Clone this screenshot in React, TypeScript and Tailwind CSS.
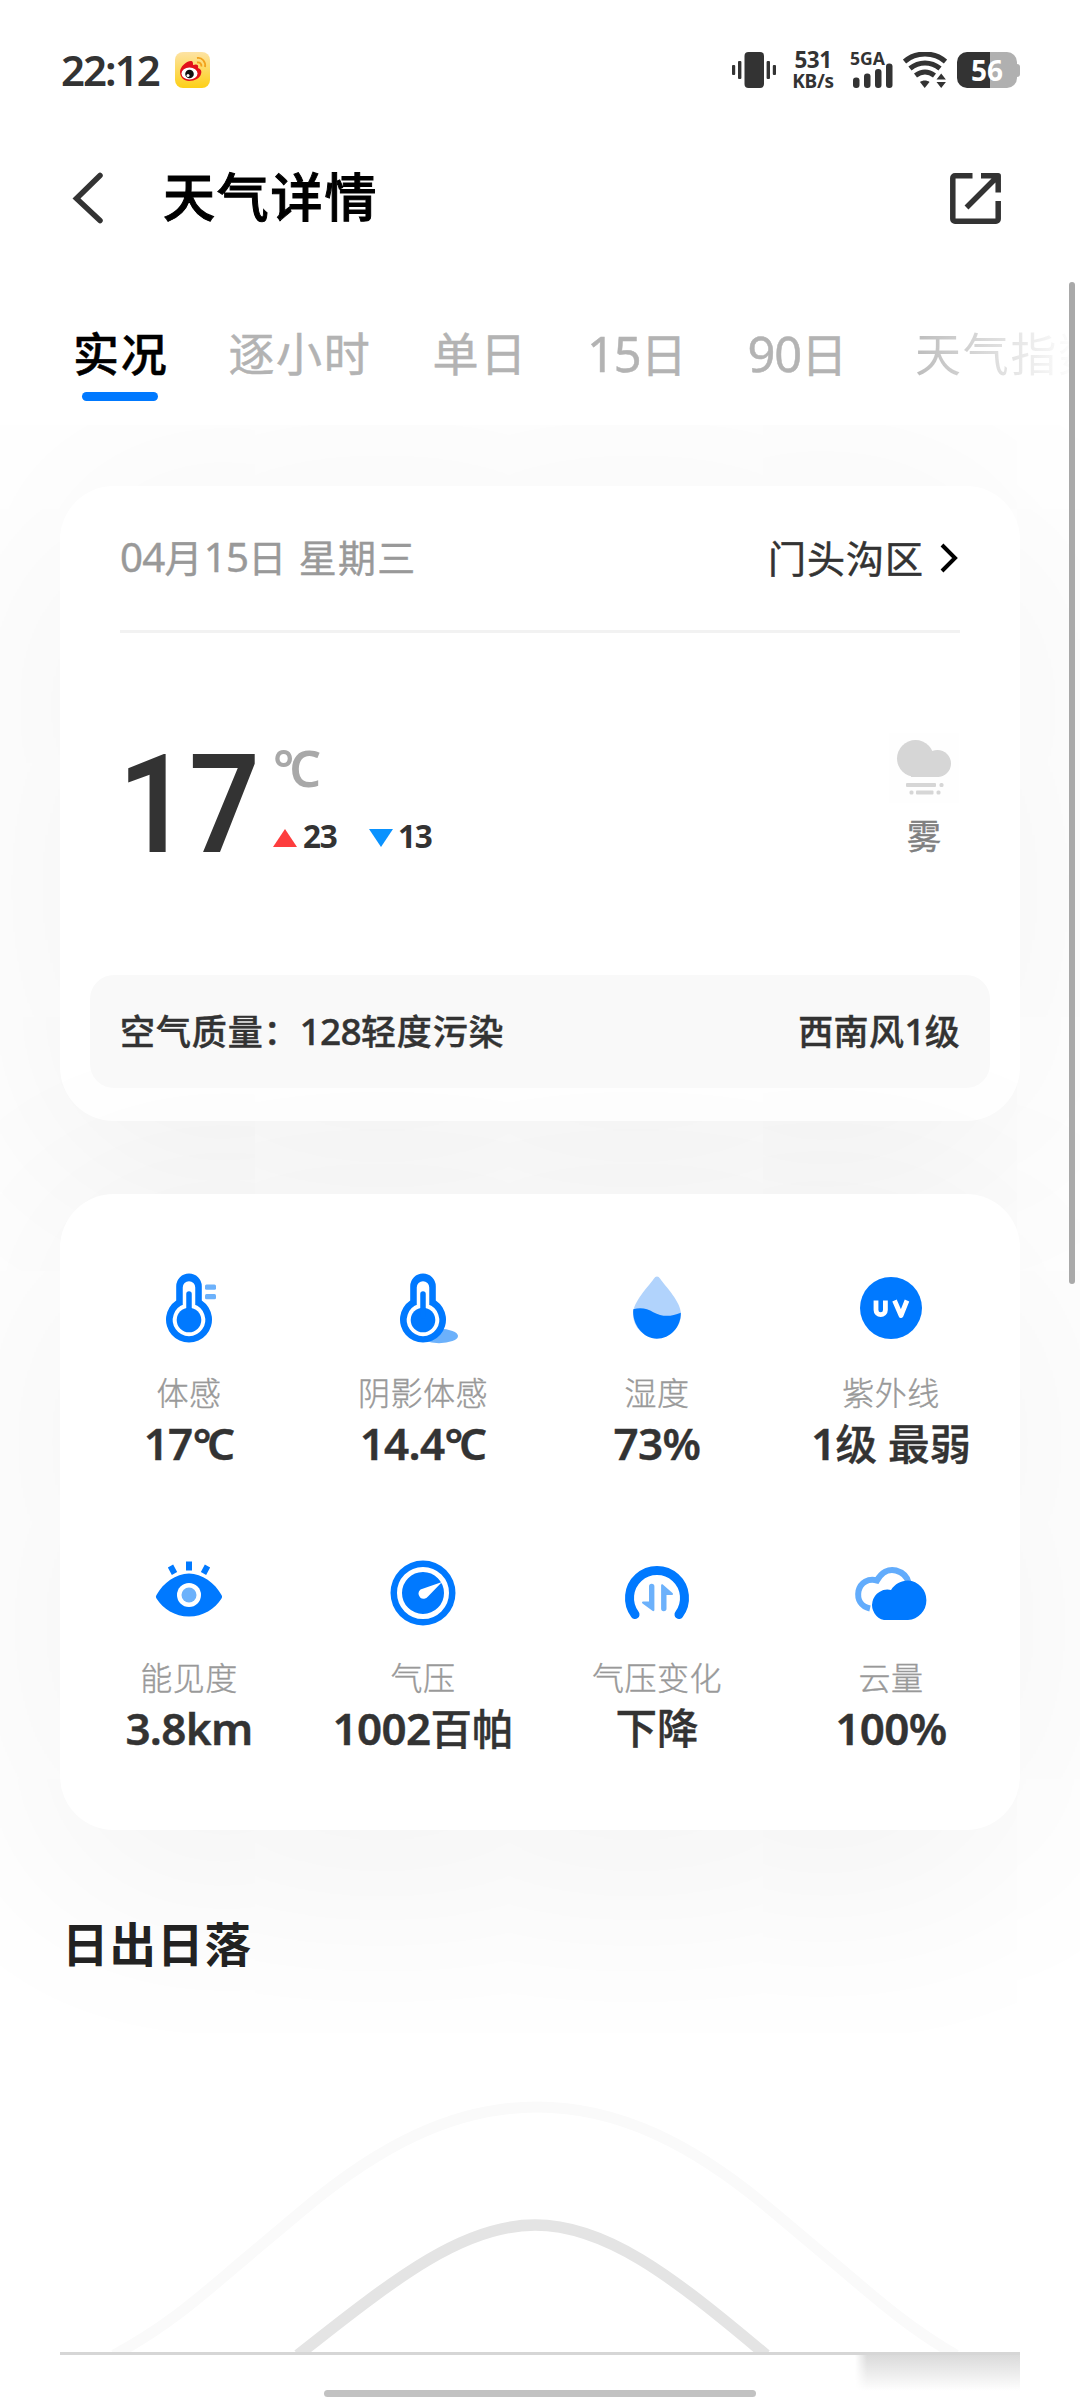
import type { ReactNode } from 'react';

const BLUE = '#0079ff';
const PALE = '#6cb1fb';

/** Mixed text: digits and Latin letters are set slightly larger and tighter than the Chinese glyphs. */
function Mixed({ children, bold = false }: { children: string; bold?: boolean }) {
  const latin = bold ? 'text-[1.06em] font-semibold tracking-[-0.015em]' : 'text-[1.06em] tracking-[-0.02em]';
  return (
    <>
      {children.split(/(°C|[\x21-\x7e]+)/).map((part, i) =>
        part === '' ? null : part === '°C' ? (
          <span key={i} className={latin}>
            <span className="tracking-[-0.1em]">°</span>C
          </span>
        ) : i % 2 === 1 ? (
          <span key={i} className={latin}>
            {part}
          </span>
        ) : (
          part
        ),
      )}
    </>
  );
}

function StatusBar() {
  return (
    <div className="flex h-[140px] items-center pr-[60px] pl-[61px] text-[#333]">
      <span className="w-[98px] text-[42px] leading-none font-semibold tracking-[-2px] whitespace-nowrap">22:12</span>
      <svg className="ml-[16px]" width="35" height="36" viewBox="0 0 35 36">
        <defs>
          <linearGradient id="wb" x1="0" y1="0" x2="0" y2="1">
            <stop offset="0" stopColor="#fde3a4" />
            <stop offset="1" stopColor="#fdd017" />
          </linearGradient>
        </defs>
        <rect width="35" height="36" rx="8" fill="url(#wb)" />
        <path d="M5 20C5 15 11 9 16 9c2 0 2 2 2 4 3-1 6-1 5 3 3 1 4 3 3 6-1 4-6 7-12 7-5 0-9-4-9-9z" fill="#e2101a" />
        <ellipse cx="14.5" cy="21.5" rx="8" ry="6" fill="#fff" />
        <circle cx="14.500" cy="22" r="4.300" fill="#111" />
        <circle cx="13" cy="23.500" r="1.500" fill="#fff" />
        <path d="M22 6c5-1 9 4 8 9M22 10.500c3-.5 4.800 1.500 4.300 4" fill="none" stroke="#f2a11c" strokeWidth="1.900" />
      </svg>
      <div className="ml-auto flex items-center">
        <svg className="-ml-[2px]" width="44" height="36" viewBox="0 0 44 36" fill="#333">
          <rect x="12.500" y="0" width="19.500" height="36" rx="4" />
          <rect x="0" y="13" width="3.200" height="10" rx="1" />
          <rect x="6" y="9" width="3.400" height="18" rx="1" />
          <rect x="34.600" y="9" width="3.400" height="18" rx="1" />
          <rect x="40.800" y="13" width="3.200" height="10" rx="1" />
        </svg>
        <div className="ml-[15px] flex w-[44px] flex-col items-center font-bold whitespace-nowrap">
          <span className="text-[22.500px] leading-[20px] tracking-[-0.500px]">531</span>
          <span className="mt-[1px] text-[19px] leading-[20px] tracking-[-0.300px]">KB/s</span>
        </div>
        <svg className="ml-[15px] overflow-visible" width="46" height="38" viewBox="0 0 46 38" fill="#333">
          <text x="0" y="14" fontSize="18.500" fontWeight="700" textLength="35" lengthAdjust="spacingAndGlyphs">
            5GA
          </text>
          <rect x="3" y="26.500" width="6.500" height="10.500" rx="3" />
          <rect x="14" y="22.500" width="6.500" height="14.500" rx="3" />
          <rect x="25" y="18" width="6.500" height="19" rx="3" />
          <rect x="36" y="12.500" width="6.500" height="24.500" rx="3" />
        </svg>
        <svg className="ml-[7px]" width="44" height="37" viewBox="0 0 44 37" fill="none" stroke="#333" strokeWidth="5">
          <path d="M1.500 9.500C13-.500 31-.500 42.500 9.500" />
          <path d="M7 16.500c9-7.500 21-7.500 30 0" />
          <path d="M12.500 23.500c6-4.500 13-4.500 19 0" />
          <path d="M17 30c2.500-2 7-2 9.500 0L21.700 36z" fill="#333" stroke="none" />
          <path d="M33.500 27.500l4.700-6 4.700 6zM33.500 30l4.700 6 4.700-6z" fill="#333" stroke="none" />
        </svg>
        <div className="ml-[10px] flex h-[36px] w-[63px] items-center">
          <div className="flex h-[36px] w-[60px] items-center justify-center rounded-[10px] bg-linear-to-r from-[#333] from-55% to-[#b0b0b0] to-55% text-[28px] leading-none font-bold text-white">
            56
          </div>
          <div className="h-[13px] w-[3px] rounded-r-[3px] bg-[#b0b0b0]" />
        </div>
      </div>
    </div>
  );
}

function TitleBar() {
  return (
    <div className="flex h-[116px] items-center pr-[79px] pl-[72px]">
      <svg width="32" height="52" viewBox="0 0 32 52" fill="none" stroke="#333" strokeWidth="5.500" strokeLinecap="round">
        <path d="M28 3.500L4.500 26.500 28 48.500" />
      </svg>
      <h1 className="mb-[3px] ml-[59px] text-[52px] leading-none font-medium tracking-[1.800px] text-black [-webkit-text-stroke:1px]">
        天气详情
      </h1>
      <svg className="ml-auto" width="51" height="51" viewBox="0 0 51 51" fill="none" stroke="#333" strokeWidth="5.500" strokeLinejoin="round">
        <path d="M22.500 2.800H5a2.200 2.200 0 0 0-2.200 2.200v41a2.200 2.200 0 0 0 2.200 2.200h41a2.200 2.200 0 0 0 2.200-2.200V28" />
        <path d="M31 2.800h17.200V19.500M47 4L16.500 34.500" />
      </svg>
    </div>
  );
}

const tabs = [
  { label: '逐小时', className: '-ml-[1px]' },
  { label: '单日', className: '' },
  { label: '15日', className: '-ml-[2px] -mr-[2px]' },
  { label: '90日', className: '' },
  {
    label: '天气指数',
    className:
      'ml-[5px] bg-linear-to-r from-[#bdbdbd] to-white to-[160px] bg-clip-text text-transparent [-webkit-text-stroke:0px]',
  },
];

function Tabs() {
  return (
    <nav className="flex h-[169px] gap-[61px] overflow-hidden pt-[63px] pl-[73px] text-[46px] leading-[68px] tracking-[1.700px] whitespace-nowrap text-[#b3b3b3] [-webkit-text-stroke:0.500px]">
      <div className="flex flex-col items-center font-medium text-black">
        <span>实况</span>
        <span className="mt-[5px] mr-[2px] h-[9px] w-[76px] rounded-full bg-[#0079ff]" />
      </div>
      {tabs.map((t) => (
        <span key={t.label} className={t.className}>
          <Mixed>{t.label}</Mixed>
        </span>
      ))}
    </nav>
  );
}

function FogIcon() {
  return (
    <svg width="70" height="70" viewBox="0 0 70 70" fill="#d6d6d6">
      <rect width="70" height="70" fill="#fefefe" />
      <circle cx="26.500" cy="25.500" r="18.500" />
      <circle cx="48.500" cy="30.500" r="13.500" />
      <rect x="22" y="28" width="28" height="16" />
      <rect x="17" y="50" width="30" height="4" rx="1" />
      <rect x="50.500" y="50" width="4" height="4" rx="1.500" />
      <rect x="20.500" y="57.500" width="4" height="4" rx="1.500" />
      <rect x="27" y="57.500" width="17.500" height="4" rx="1" />
      <rect x="47.500" y="57.500" width="4" height="4" rx="1.500" />
    </svg>
  );
}

function CurrentCard() {
  return (
    <section className="mx-[60px] flex h-[635px] flex-col rounded-[54px] bg-white shadow-[0_30px_240px_rgba(0,0,0,0.07)]">
      <div className="mx-[60px] flex h-[147px] items-center justify-between border-b-[3px] border-[#f2f2f2]">
        <span className="mb-[1px] text-[38px] leading-none tracking-[1.300px] text-[#999] [-webkit-text-stroke:0.400px]">
          <Mixed>04月15日 星期三</Mixed>
        </span>
        <span className="flex items-center text-[38px] leading-none tracking-[1px] text-[#333] [-webkit-text-stroke:0.500px]">
          门头沟区
          <svg className="mr-[2px] ml-[16px]" width="18" height="30" viewBox="0 0 18 30" fill="none" stroke="#000" strokeWidth="4">
            <path d="M2 2l13 13L2 28" />
          </svg>
        </span>
      </div>
      <div className="flex h-[342px] items-start justify-between px-[60px]">
        <div className="flex">
          <span className="mt-[102px] -ml-[2px] w-[147px] origin-left scale-x-90 font-['Roboto',sans-serif] text-[138px] leading-[140px] font-semibold tracking-[0px] text-[#333]">
            17
          </span>
          <div className="flex flex-col pt-[110px] pl-[8px]">
            <span className="text-[50px] leading-[50px] font-semibold tracking-[-5px] text-[#a8a8a8]">°C</span>
            <div className="mt-[26px] flex items-center text-[31.500px] leading-[34px] font-bold tracking-[-1.200px] text-[#333]">
              <svg className="mt-[4px]" width="24" height="18" viewBox="0 0 24 18">
                <path d="M12 0l12 18H0z" fill="#fd3d3e" />
              </svg>
              <span className="ml-[6px] w-[66px]">23</span>
              <svg className="mt-[4px]" width="24" height="18" viewBox="0 0 24 18">
                <path d="M0 0h24L12 18z" fill="#0a92fe" />
              </svg>
              <span className="ml-[5px]">13</span>
            </div>
          </div>
        </div>
        <div className="mt-[100px] mr-[1px] flex w-[70px] flex-col items-center">
          <FogIcon />
          <span className="mt-[16px] text-[34px] leading-[34px] text-[#808080] [-webkit-text-stroke:0.500px]">雾</span>
        </div>
      </div>
      <div className="mx-[30px] flex h-[113px] items-center justify-between rounded-[24px] bg-[#f9f9f9] px-[30px] pb-[2px] text-[35px] leading-none font-medium tracking-[0.900px] text-[#333] [-webkit-text-stroke:0.400px]">
        <span>
          <Mixed>空气质量：128轻度污染</Mixed>
        </span>
        <span className="tracking-[0.300px]">
          <Mixed>西南风1级</Mixed>
        </span>
      </div>
    </section>
  );
}

function Thermometer() {
  return (
    <>
      <path d="M29.200 34.500V20.200a12.800 12.800 0 0 1 25.600 0V34.500a23 23 0 1 1-25.600 0z" fill={BLUE} />
      <path d="M38 40.500V21.500a4 4 0 0 1 8 0V40.500a14 14 0 1 1-8 0z" fill="#fff" stroke="#fff" strokeWidth="4.500" />
      <circle cx="42" cy="54" r="12.300" fill={BLUE} />
      <path d="M42 28v22" stroke={BLUE} strokeWidth="5.500" strokeLinecap="round" />
    </>
  );
}

const icons: Record<string, ReactNode> = {
  feels: (
    <>
      <Thermometer />
      <rect x="58" y="18.500" width="11" height="5.200" rx="1.500" fill={PALE} />
      <rect x="58" y="28" width="11" height="5.200" rx="1.500" fill={PALE} />
    </>
  ),
  shade: (
    <>
      <ellipse cx="58" cy="70" rx="19" ry="7.200" fill={PALE} />
      <Thermometer />
    </>
  ),
  humidity: (
    <>
      <path d="M42 10.500c1.500 0 2 .8 3 2C51 21 66 36 66 48a24 24 0 0 1-48 0C18 36 33 21 39 12.500c1-1.200 1.500-2 3-2z" fill="#b1d3fc" />
      <path d="M18.300 43.200c8-2.200 14-.5 20 3 9 5 18 4.500 27.500.500.300 14-10.500 26-24 26S16.800 58 18.300 43.200z" fill={BLUE} />
    </>
  ),
  uv: (
    <>
      <circle cx="42" cy="42" r="31" fill={BLUE} />
      <path d="M27 34.500v9.500a4.700 4.700 0 0 0 9.400 0V34.500M45.500 34.500l6.500 15L58 34.500" fill="none" stroke="#fff" strokeWidth="4.800" strokeLinejoin="round" />
    </>
  ),
  visibility: (
    <>
      <path d="M9.500 44C16 32 29 22.500 42 22.500S68 32 74.500 44c.8 1.300.8 2.200 0 3.500C68 58 56 65.500 42 65.500S16 58 9.500 47.500c-.8-1.300-.8-2.200 0-3.500z" fill={BLUE} />
      <circle cx="42" cy="44" r="12" fill="#fff" />
      <circle cx="42" cy="44" r="7.500" fill={PALE} />
      <path d="M42 10.500v9M23.500 15l4 7.500M60.500 15l-4 7.500" stroke={BLUE} strokeWidth="6" />
    </>
  ),
  pressure: (
    <>
      <circle cx="42" cy="42" r="32.500" fill={BLUE} />
      <circle cx="42" cy="42" r="23.500" fill="none" stroke="#fff" strokeWidth="5" />
      <path d="M61 31L47 45.500a5.200 5.200 0 1 1-7.500-7z" fill="#fff" />
    </>
  ),
  change: (
    <>
      <path d="M20 63.500A27.500 27.500 0 1 1 64 63.500" fill="none" stroke={BLUE} strokeWidth="9" strokeLinecap="round" />
      <g fill={PALE}>
        <path d="M34 35.500a2.700 2.700 0 0 1 5.400 0V59c0 1-1 1.500-2 .8L27.500 52.500c-1-1-.5-2 .5-2h6z" />
        <path d="M51.500 57.500a2.700 2.700 0 0 1-5.400 0V34.500c0-1 1-1.500 2-.8L57.500 42c1 1 .5 2-.5 2h-5.500z" />
      </g>
    </>
  ),
  cloud: (
    <>
      <path d="M21 57.500c-9-2-13-9-11.500-17.500C11.500 31.500 19.500 27 28 29.500 32.500 21.500 39.500 17.500 47 19.500c7 2 11 6 12.500 12" fill="none" stroke="#62acfc" strokeWidth="6" />
      <path d="M35 69a15.300 15.300 0 1 1 7-30C46 33 52 29.500 59 29.500a19.800 19.800 0 0 1 0 39.500z" fill={BLUE} />
    </>
  ),
};

const metrics = [
  { icon: 'feels', label: '体感', value: '17°C' },
  { icon: 'shade', label: '阴影体感', value: '14.4°C' },
  { icon: 'humidity', label: '湿度', value: '73%' },
  { icon: 'uv', label: '紫外线', value: '1级 最弱' },
  { icon: 'visibility', label: '能见度', value: '3.8km' },
  { icon: 'pressure', label: '气压', value: '1002百帕' },
  { icon: 'change', label: '气压变化', value: '下降' },
  { icon: 'cloud', label: '云量', value: '100%' },
];

function MetricsCard() {
  return (
    <section className="mx-[60px] mt-[73px] grid h-[636px] auto-rows-[285px] grid-cols-4 rounded-[54px] bg-white px-[12px] pt-[72px] shadow-[0_30px_240px_rgba(0,0,0,0.07)]">
      {metrics.map((m) => (
        <div key={m.label} className="flex flex-col items-center whitespace-nowrap">
          <svg width="84" height="84" viewBox="0 0 84 84">
            {icons[m.icon]}
          </svg>
          <span className="mt-[23px] text-[32px] leading-[40px] font-light tracking-[0.500px] text-[#999] [-webkit-text-stroke:0.400px]">
            {m.label}
          </span>
          <span className="mt-[6px] text-[41.500px] leading-[48px] font-medium text-[#333] [-webkit-text-stroke:0.400px]">
            <Mixed bold>{m.value}</Mixed>
          </span>
        </div>
      ))}
    </section>
  );
}

function SunSection() {
  return (
    <section className="mx-[60px] flex flex-col">
      <h2 className="mt-[82px] ml-[2px] text-[46.500px] leading-[64px] font-bold tracking-[1px] text-[#222]">日出日落</h2>
      <svg className="mt-[104px]" width="960" height="272" viewBox="60 2080 960 272" fill="none">
        <path
          d="M114 2355C165 2328 200 2297 234 2268L303 2210C380 2145 455 2107 537 2107S694 2145 771 2210L840 2268C874 2297 909 2328 956 2355"
          stroke="#fafafa"
          strokeWidth="11"
        />
        <path d="M298 2355C400 2274 465 2225 535 2225S670 2274 766 2355" stroke="#e4e4e4" strokeWidth="11.500" />
      </svg>
      <div className="h-[3px] bg-[#d6d6d6]" />
      <div className="ml-auto h-[36px] w-[165px] bg-linear-to-b from-[#dadada] to-white mask-linear-[90deg,transparent,black_12px]" />
    </section>
  );
}

export default function App() {
  return (
    <div
      lang="zh-CN"
      className="relative h-[2400px] w-[1080px] overflow-hidden bg-white font-['Noto_Sans','Noto_Sans_CJK_SC',sans-serif]"
    >
      <header className="relative z-10 h-[425px] bg-white">
        <StatusBar />
        <TitleBar />
        <Tabs />
      </header>
      <main className="pt-[61px]">
        <CurrentCard />
        <MetricsCard />
        <SunSection />
      </main>
      <div className="absolute top-[282px] right-[5px] z-20 h-[1002px] w-[6px] rounded-full bg-[#a9a9a9]" />
      <div className="absolute bottom-[3px] left-[324px] z-20 h-[7px] w-[432px] rounded-full bg-[#c2c2c2]" />
    </div>
  );
}
